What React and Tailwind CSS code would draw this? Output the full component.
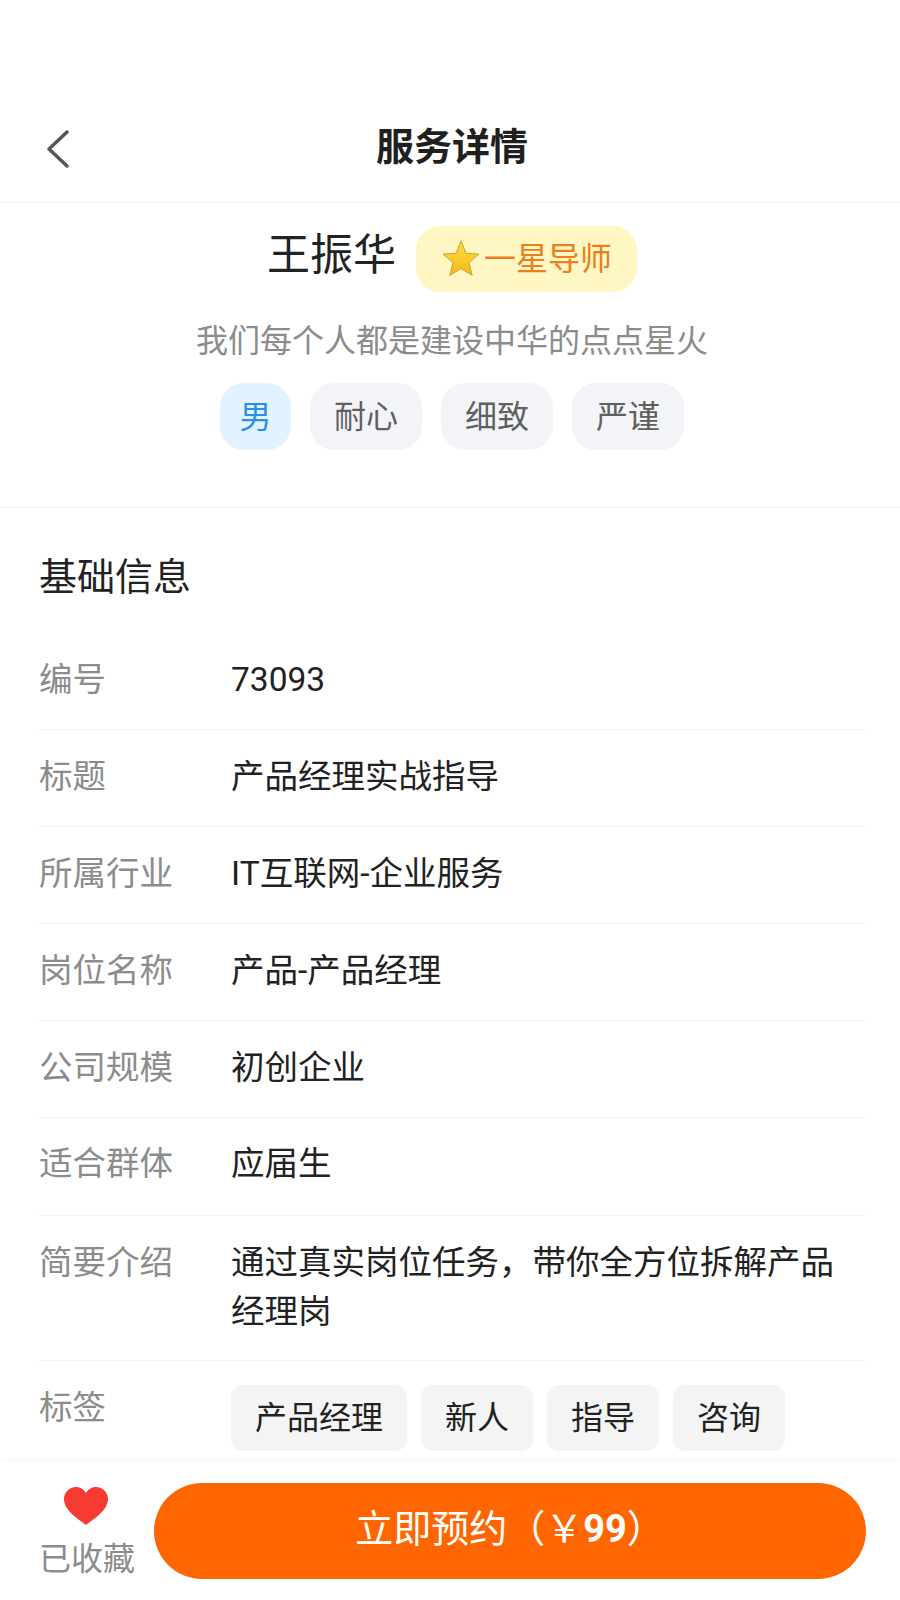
import React from 'react';

const FONT = "font-['Roboto','Noto_Sans_CJK_SC',sans-serif]";

const traits = ['耐心', '细致', '严谨'];
const skills = ['产品经理', '新人', '指导', '咨询'];

const rows = [
  { label: '编号', value: '73093', h: 'h-[97px] pb-[2px]' },
  { label: '标题', value: '产品经理实战指导', h: 'h-[97px] pb-[2px]' },
  { label: '所属行业', value: 'IT互联网-企业服务', h: 'h-[97px] pb-[2px]' },
  { label: '岗位名称', value: '产品-产品经理', h: 'h-[97px] pb-[2px]' },
  { label: '公司规模', value: '初创企业', h: 'h-[97px] pb-[2px]' },
  { label: '适合群体', value: '应届生', h: 'h-[98px] pb-[4px]' },
];

const App = () => {
  return (
    <div className={`${FONT} flex h-[1600px] w-[900px] flex-col overflow-hidden bg-white`}>
      {/* Header */}
      <div className="flex h-[203px] shrink-0 items-end border-b border-[#f3f3f3] pb-[30px]">
        <div className="relative flex h-[50px] w-full items-center justify-center pl-[4px]">
          <svg className="absolute left-[44px] top-[7px]" width="28" height="40" viewBox="0 0 28 40" fill="none">
            <path d="M23 3 L5 20 L23 37" stroke="#555555" strokeWidth="3.5" strokeLinecap="round" strokeLinejoin="round" />
          </svg>
          <h1 className="text-[38px] font-bold leading-[50px] text-[#1f1f1f]">服务详情</h1>
        </div>
      </div>

      <div className="min-h-0 flex-1 overflow-hidden">
        {/* Profile */}
        <div className="flex h-[305px] flex-col items-center border-b border-[#f3f3f3] pl-[4px] pt-[23px]">
          <div className="flex items-start gap-[20px]">
            <span className="mt-[1px] text-[43px] leading-[56px] text-[#222222]">王振华</span>
            <div className="flex h-[66px] w-[221px] items-center justify-center gap-[3px] rounded-[24px] bg-[#fef6c3]">
              <svg width="40" height="40" viewBox="0 0 40 40">
                <defs>
                  <linearGradient id="star" x1="0" y1="0" x2="0" y2="1">
                    <stop offset="0" stopColor="#fbdc45" />
                    <stop offset="1" stopColor="#f6b915" />
                  </linearGradient>
                </defs>
                <path
                  d="M20 2 L25 14.3 L38 15.1 L28 23.6 L31.2 36.4 L20 29.5 L8.8 36.4 L12 23.6 L2 15.1 L15 14.3 Z"
                  fill="url(#star)"
                  stroke="#cfa526"
                  strokeWidth="1"
                  strokeLinejoin="round"
                />
              </svg>
              <span className="text-[32px] leading-[42px] text-[#ea7f1c]">一星导师</span>
            </div>
          </div>
          <p className="mt-[28px] text-[32px] leading-[42px] text-[#8c8c8c]">我们每个人都是建设中华的点点星火</p>
          <div className="mt-[21px] flex gap-[19px]">
            <span className="flex h-[67px] w-[71px] items-center justify-center rounded-[24px] bg-[#e3f2ff] text-[32px] text-[#2b8fe8]">男</span>
            {traits.map((t) => (
              <span key={t} className="flex h-[67px] w-[112px] items-center justify-center rounded-[24px] bg-[#f3f4f8] text-[32px] text-[#5f5f5f]">
                {t}
              </span>
            ))}
          </div>
        </div>

        {/* Basic info */}
        <div className="pl-[39px] pr-[35px]">
          <h2 className="mt-[44px] text-[38px] leading-[50px] text-[#222222]">基础信息</h2>
          <div className="mt-[31px] flex flex-col">
            {rows.map((row) => (
              <div key={row.label} className={`flex ${row.h} items-center border-b border-[#f3f3f3] text-[33.5px]`}>
                <span className="w-[192px] shrink-0 text-[#8c8c8c]">{row.label}</span>
                <span className="text-[#222222]">{row.value}</span>
              </div>
            ))}
            <div className="flex h-[145px] border-b border-[#f3f3f3] pt-[22px] text-[33.5px] leading-[49px]">
              <span className="w-[192px] shrink-0 text-[#8c8c8c]">简要介绍</span>
              <span className="text-[#222222]">通过真实岗位任务，带你全方位拆解产品经理岗</span>
            </div>
            <div className="flex pt-[24px]">
              <span className="-mt-[2px] w-[192px] shrink-0 text-[33.5px] leading-[49px] text-[#8c8c8c]">标签</span>
              <div className="flex gap-[14px] text-[32px]">
                {skills.map((s) => (
                  <span key={s} className="flex h-[66px] items-center rounded-[12px] bg-[#f4f4f4] px-[24px] text-[#222222]">
                    {s}
                  </span>
                ))}
              </div>
            </div>
          </div>
        </div>
      </div>

      {/* Footer */}
      <div className="relative flex h-[138px] shrink-0 items-start bg-white pl-[39px] pr-[34px] pt-[21px] shadow-[0_-2px_6px_rgba(0,0,0,0.04)]">
        <div className="flex w-[115px] shrink-0 flex-col items-start">
          <svg className="ml-[24px] mt-[3px]" width="46" height="40" viewBox="0 0 46 40">
            <path d="M23 39 C17 34 1 25 1 13 C1 6 6.5 1 13 1 C17.5 1 21 3.5 23 7 C25 3.5 28.5 1 33 1 C39.5 1 45 6 45 13 C45 25 29 34 23 39 Z" fill="#f73b30" />
          </svg>
          <span className="mt-[12px] whitespace-nowrap text-[32px] leading-[42px] text-[#8c8c8c]">已收藏</span>
        </div>
        <button className="flex h-[96px] flex-1 items-center justify-center rounded-[48px] bg-[#ff6600] pb-[4px] text-[38px] text-white">
          立即预约（￥<span className="font-bold">99</span>）
        </button>
      </div>
    </div>
  );
};

export default App;
